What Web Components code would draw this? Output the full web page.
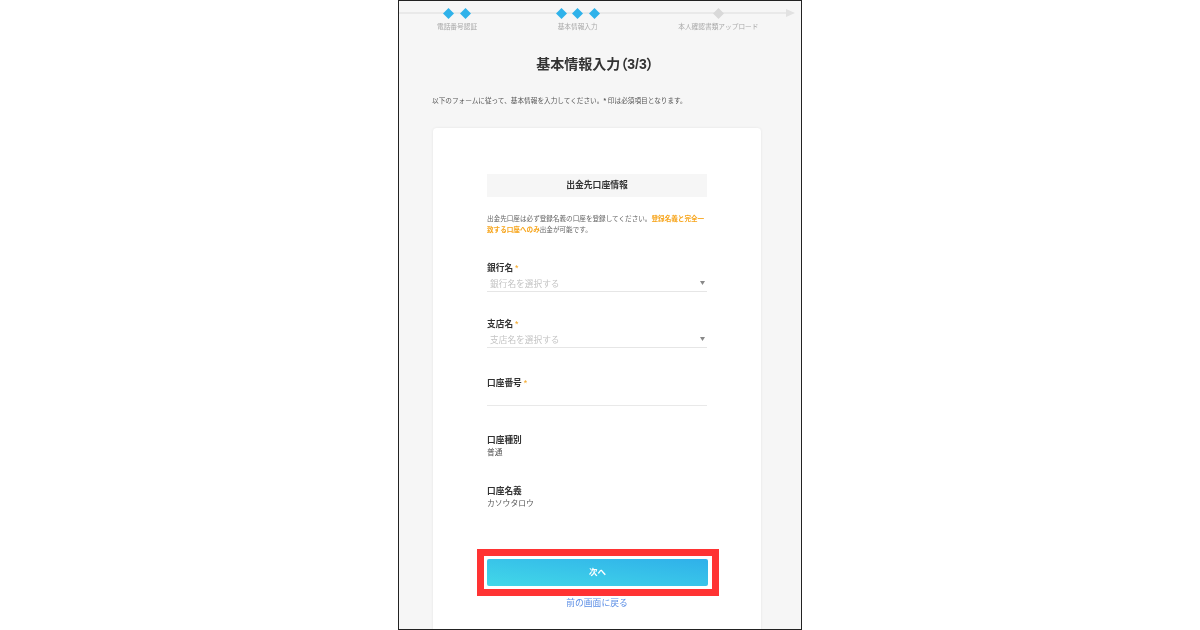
<!DOCTYPE html>
<html lang="ja">
<head>
<meta charset="utf-8">
<title>基本情報入力</title>
<style>
html,body{margin:0;padding:0;background:#fff}
body{font-family:"Liberation Sans","Noto Sans CJK JP",sans-serif;color:#333}
</style>
</head>
<body>
<signup-frame>
  <step-bar slot="steps">
    <step-item done="2" label="電話番号認証"></step-item>
    <step-item done="3" label="基本情報入力"></step-item>
    <step-item todo="1" label="本人確認書類アップロード"></step-item>
  </step-bar>
  <h1 slot="title">基本情報入力（3/3）</h1>
  <span slot="intro">以下のフォームに従って、基本情報を入力してください。<b>*</b> 印は必須項目となります。</span>
  <form-card>
    <section-head>出金先口座情報</section-head>
    <note-text>出金先口座は必ず登録名義の口座を登録してください。<strong>登録名義と完全一致する口座へのみ</strong>出金が可能です。</note-text>
    <form-field label="銀行名" required kind="select" placeholder="銀行名を選択する" style="--gap:27px"></form-field>
    <form-field label="支店名" required kind="select" placeholder="支店名を選択する" style="--gap:30px"></form-field>
    <form-field label="口座番号" required kind="input" style="--gap:29px"></form-field>
    <form-field label="口座種別" kind="value" value="普通"></form-field>
    <form-field label="口座名義" kind="value" value="カソウタロウ"></form-field>
    <next-action label="次へ" back="前の画面に戻る"></next-action>
  </form-card>
</signup-frame>
<script>
const FONT='"Liberation Sans","Noto Sans CJK JP",sans-serif';
const def=(name,render)=>customElements.define(name,class extends HTMLElement{
  connectedCallback(){ if(!this.shadowRoot){this.attachShadow({mode:'open'}).innerHTML=render(this);} }
});
const diamond=c=>`<svg width="11" height="11" viewBox="0 0 11 11"><polygon points="5.5,0 11,5.5 5.5,11 0,5.5" fill="${c}"/></svg>`;

def('signup-frame',()=>`<style>
:host{display:block;box-sizing:border-box;width:404px;height:630px;margin:0 auto;background:#f6f6f6;
 border:1px solid #222;overflow:hidden;font-family:${FONT}}
.blur{filter:blur(.4px)}
.t{text-align:center;margin-top:21px;padding-right:10px;font-feature-settings:"palt"}
::slotted(h1){margin:0;font-size:14px;line-height:20px;font-weight:700;color:#333}
.i{margin:22px 0 22px 33px;font-size:6.65px;line-height:10px;color:#555;white-space:nowrap}
::slotted(span){color:#555}
</style>
<div class="blur">
<slot name="steps"></slot>
<div class="t"><slot name="title"></slot></div>
<div class="i"><slot name="intro"></slot></div>
<slot></slot>
</div>`);

def('step-bar',()=>`<style>
:host{display:flex;gap:80.5px;position:relative;padding:6px 0 0 38px;height:26px}
.line{position:absolute;left:0;top:11px;width:391px;height:2px;background:#e9e9e9}
.arrow{position:absolute;left:387px;top:8px}
::slotted(*){position:relative}
</style>
<div class="line"></div>
<svg class="arrow" width="9" height="8" viewBox="0 0 9 8"><polygon points="0,0 9,4 0,8" fill="#e2e2e2"/></svg>
<slot></slot>`);

def('step-item',h=>{
  const n=+h.getAttribute('done')||0,t=+h.getAttribute('todo')||0;
  return `<style>
:host{display:block;position:relative}
.d{display:flex;justify-content:center;gap:5.6px;height:12px;align-items:center;margin:0 -10px}
svg{display:block}
.l{margin-top:3px;font-size:6.7px;line-height:10px;color:#a9a9a9;white-space:nowrap}
</style>
<div class="d">${diamond('#2fb2ea').repeat(n)}${diamond('#d9d9d9').repeat(t)}</div>
<div class="l">${h.getAttribute('label')}</div>`;
});

def('form-card',()=>`<style>
:host{display:block;box-sizing:border-box;width:328px;min-height:520px;margin-left:34px;padding:46px 54px 20px;
 background:#fff;border-radius:4px;box-shadow:0 0 3px rgba(0,0,0,.08)}
</style><slot></slot>`);

def('section-head',()=>`<style>
:host{display:block;height:23px;line-height:23px;background:#f6f6f6;text-align:center;font-size:8.8px;font-weight:700;color:#333}
</style><slot></slot>`);

def('note-text',()=>`<style>
:host{display:block;margin:16px 0 28px;font-size:6.6px;line-height:11px;color:#666}
::slotted(strong){color:#f7a51c}
</style><slot></slot>`);

def('form-field',h=>{
  const kind=h.getAttribute('kind'),req=h.hasAttribute('required');
  let body='';
  if(kind==='select') body=`<div class="s"><span>${h.getAttribute('placeholder')}</span><svg width="5" height="4" viewBox="0 0 5 4"><polygon points="0,0 5,0 2.5,4" fill="#888"/></svg></div>`;
  if(kind==='input') body=`<div class="n"></div>`;
  if(kind==='value') body=`<div class="v">${h.getAttribute('value')}</div>`;
  return `<style>
:host{display:block;margin-bottom:var(--gap,28px)}
.k{font-size:8.7px;line-height:10px;font-weight:700;color:#333}
.k i{font-style:normal;color:#f5a623;font-weight:400;margin-left:2px}
.s{box-sizing:border-box;height:17px;margin-top:2px;padding:0 2px 0 3px;display:flex;align-items:center;justify-content:space-between;
 border-bottom:1.5px solid #e6e6e6;font-size:8.7px;color:#c4c4c4}
.n{box-sizing:border-box;height:18px;border-bottom:1px solid #e9e9e9}
.v{margin-top:3px;font-size:7.8px;line-height:10px;color:#555}
</style>
<div class="k">${h.getAttribute('label')}${req?'<i>*</i>':''}</div>${body}`;
});

def('next-action',h=>`<style>
:host{display:block;margin-top:50px}
.mark{margin:-10px -12px -10px -10px;border:7px solid #ff3333;padding:3px 4px 3px 3px;background:#fff}
button{display:block;width:100%;height:27px;border:0;border-radius:2px;padding:0;
 background:linear-gradient(to top right,#42d8e8,#2fb0ea);color:#fff;font:700 8.5px/27px ${FONT}}
a{display:block;margin-top:12px;text-align:center;font-size:8.8px;line-height:10px;color:#5c8fe6;text-decoration:none}
</style>
<div class="mark"><button type="button">${h.getAttribute('label')}</button></div>
<a href="#">${h.getAttribute('back')}</a>`);
</script>
</body>
</html>
